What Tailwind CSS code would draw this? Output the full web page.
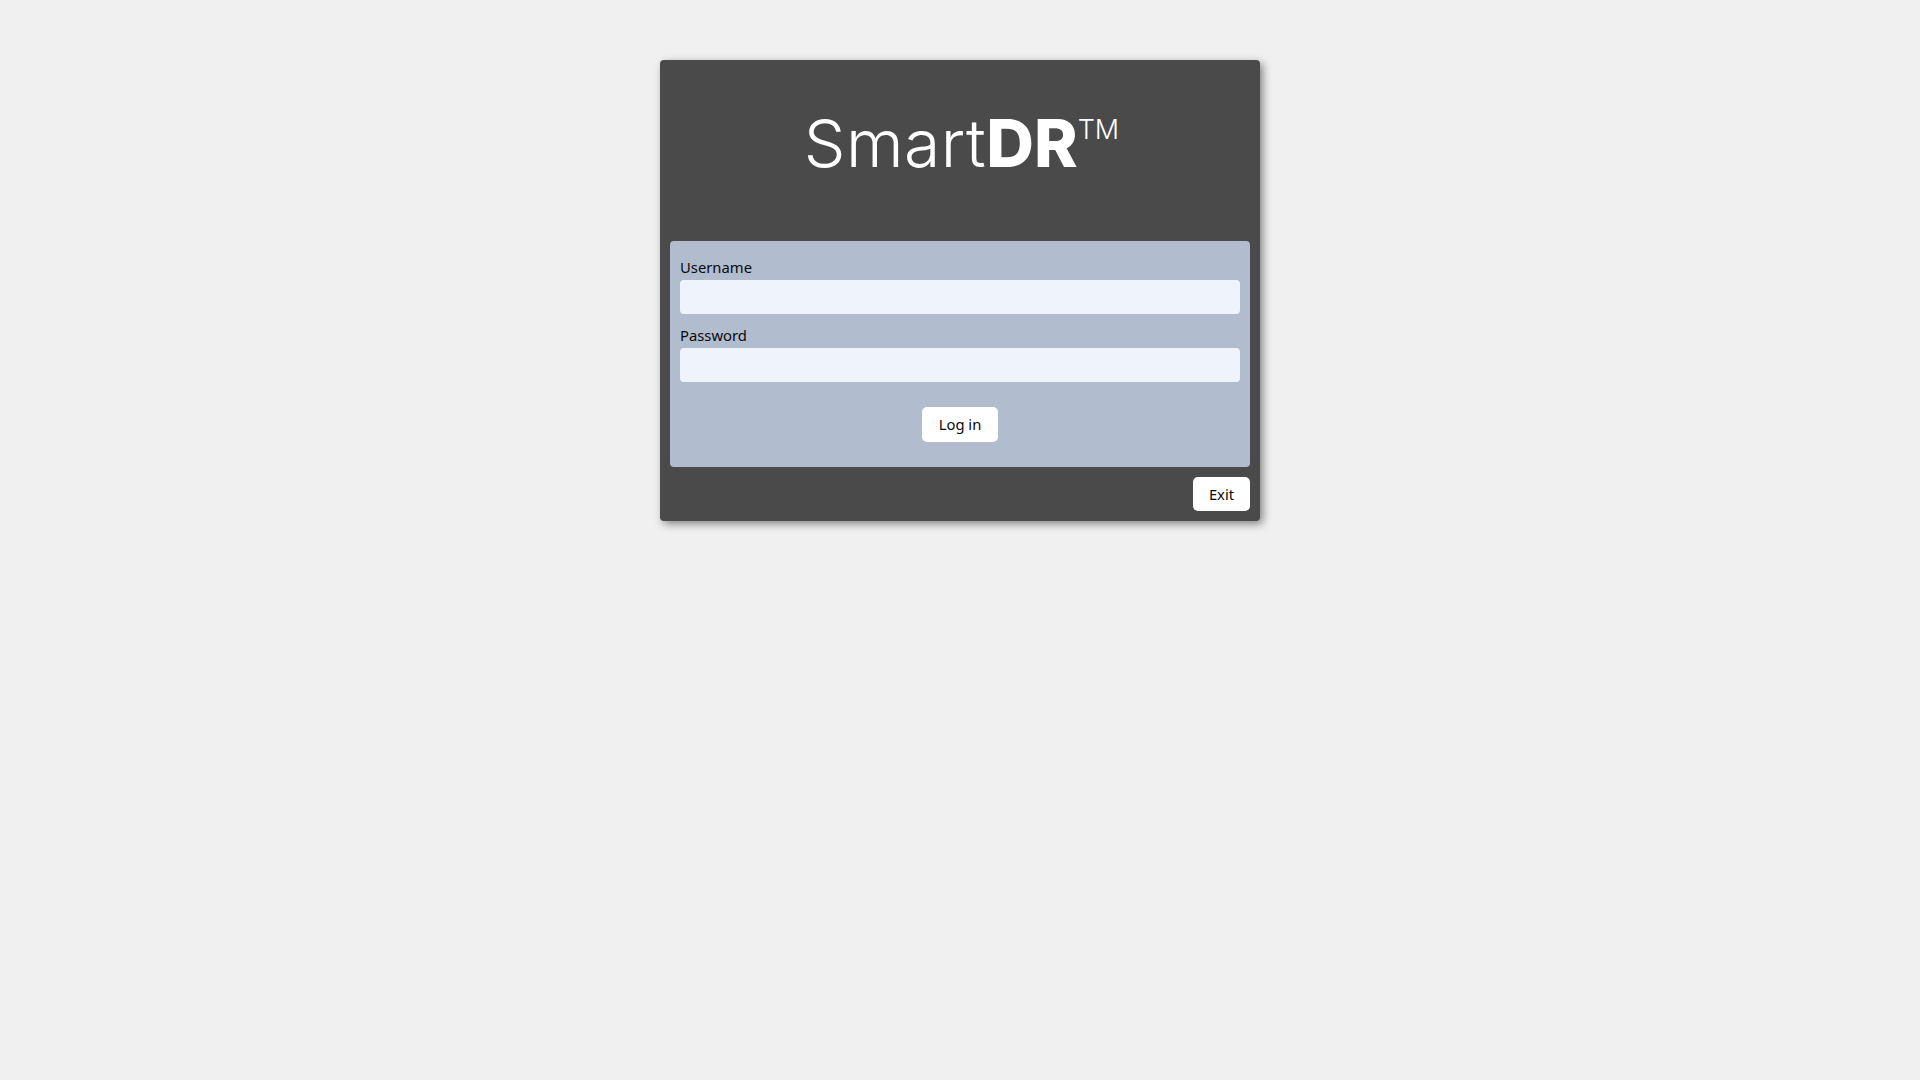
<!DOCTYPE html>
<html lang="en">
  <head>
    <meta charset="UTF-8" />
    <title>SmartDR</title>
    <script src="https://cdn.jsdelivr.net/npm/@tailwindcss/browser@4"></script>
  </head>
  <body class="bg-[#f0f0f0] min-h-[1080px] pt-[60px] font-['Noto_Sans','Open_Sans',sans-serif] text-[#0a0a0a]">
    <div class="w-[600px] h-[461px] mx-auto bg-[#4a4a4a] rounded-[4px] shadow-[3px_3px_8px_rgba(0,0,0,0.45)] p-[10px] flex flex-col">
      <div class="h-[171px] flex justify-center pt-[33px] pl-[3px]">
        <div class="text-white font-['Inter',sans-serif] text-[66px] leading-[80px] font-light flex items-start h-[80px]">
          <span class="tracking-[0.5px]">Smart</span><span class="font-extrabold">DR</span><span class="text-[27px] leading-[34px] mt-[10px] font-light">TM</span>
        </div>
      </div>
      <form class="h-[226px] bg-[#b1bccf] rounded-[4px] px-[10px] pt-[14px] flex flex-col">
        <label class="text-[14.8px] leading-[24px] h-[25px]" for="username">Username</label>
        <input id="username" type="text" class="h-[34px] w-full bg-[#eff3fb] rounded-[4px] outline-none" />
        <label class="text-[14.8px] leading-[24px] h-[25px] mt-[9px]" for="password">Password</label>
        <input id="password" type="password" class="h-[34px] w-full bg-[#eff3fb] rounded-[4px] outline-none" />
        <button type="button" class="self-center mt-[25px] w-[76px] h-[35px] bg-white rounded-[5px] text-[14.8px]">Log in</button>
      </form>
      <div class="flex justify-end mt-[10px]">
        <button type="button" class="w-[57px] h-[34px] bg-white rounded-[5px] text-[14.8px]">Exit</button>
      </div>
    </div>
  </body>
</html>
